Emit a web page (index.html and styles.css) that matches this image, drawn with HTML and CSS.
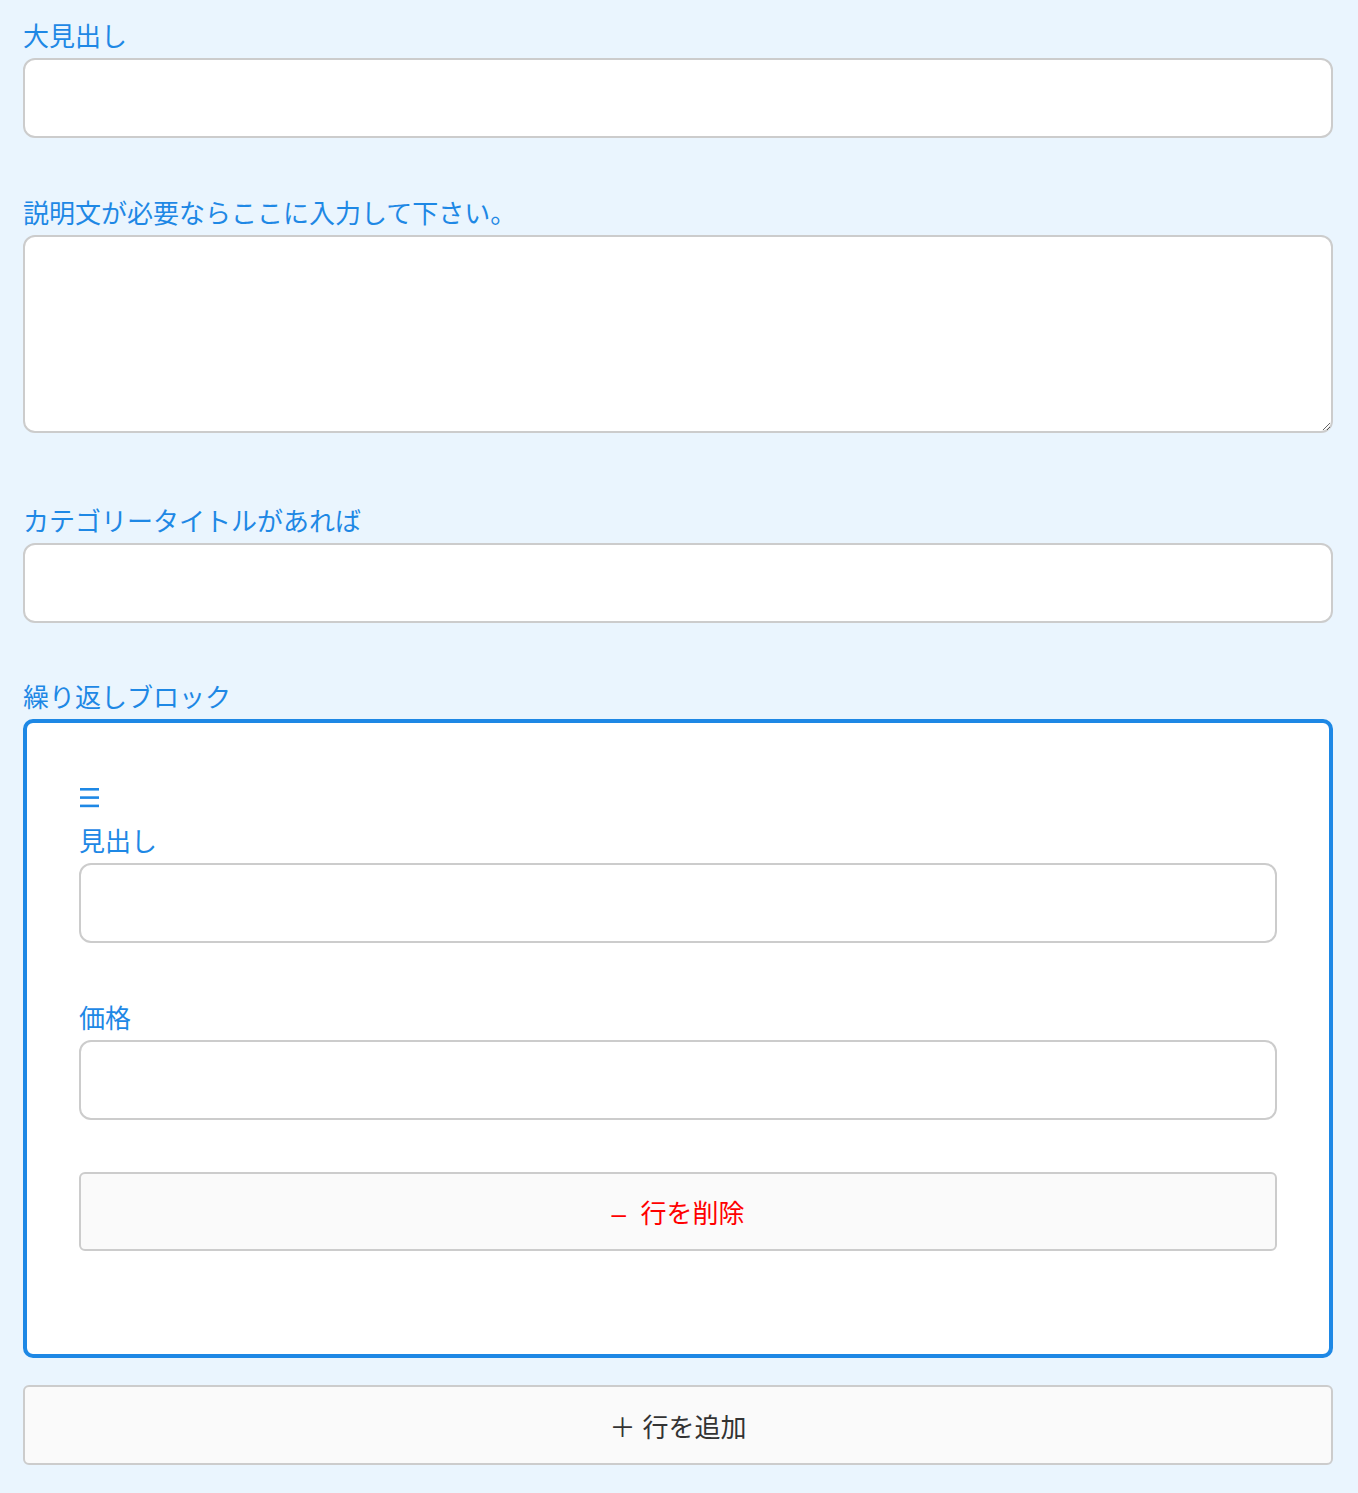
FILE: index.html
```html
<!DOCTYPE html>
<html lang="ja">
<head>
    <meta charset="UTF-8">
    <meta name="viewport" content="width=device-width, initial-scale=1.0">
    <title>ブロック編集</title>
    <link rel="stylesheet" href="styles.css">
</head>
<body>
    <div class="form">
        <div class="field field-first">
            <label class="field-label" for="mainTitle">大見出し</label>
            <input type="text" class="field-input" id="mainTitle">
        </div>

        <div class="field field-textarea">
            <label class="field-label" for="description">説明文が必要ならここに入力して下さい。</label>
            <textarea class="field-input field-input-area" id="description"></textarea>
        </div>

        <div class="field">
            <label class="field-label" for="categoryTitle">カテゴリータイトルがあれば</label>
            <input type="text" class="field-input" id="categoryTitle">
        </div>

        <div class="field field-repeat">
            <label class="field-label">繰り返しブロック</label>
            <div class="repeat-block">
                <div class="repeat-row">
                    <span class="drag-handle" title="並べ替え">
                        <svg width="20" height="20" viewBox="0 0 20 20">
                            <rect x="1" y="3" width="19" height="2.6" fill="#1e88e5"/>
                            <rect x="1" y="11.3" width="19" height="2.6" fill="#1e88e5"/>
                            <rect x="1" y="19.6" width="19" height="2.6" fill="#1e88e5"/>
                        </svg>
                    </span>

                    <div class="field field-first">
                        <label class="field-label" for="rowTitle">見出し</label>
                        <input type="text" class="field-input" id="rowTitle">
                    </div>

                    <div class="field field-last">
                        <label class="field-label" for="rowPrice">価格</label>
                        <input type="text" class="field-input" id="rowPrice">
                    </div>

                    <button type="button" class="row-button row-button-delete">– &nbsp;行を削除</button>
                </div>
            </div>
        </div>

        <button type="button" class="row-button row-button-add">＋ 行を追加</button>
    </div>
</body>
</html>
```

FILE: styles.css
```css
* {
    box-sizing: border-box;
    margin: 0;
    padding: 0;
}

body {
    font-family: "Noto Sans CJK JP", "Noto Sans", sans-serif;
    background: #eaf5fe;
    color: #333;
}

.form {
    padding: 16px 25px 28px 23px;
}

.field {
    margin-bottom: 54px;
}

.field-first {
    margin-bottom: 55px;
}

.field-label {
    display: block;
    font-size: 26px;
    line-height: 38px;
    color: #1e88e5;
    margin-bottom: 4px;
}

.field-input {
    display: block;
    width: 100%;
    height: 80px;
    padding: 10px 16px;
    border: 2px solid #ccc;
    border-radius: 12px;
    background: white;
    font-family: inherit;
    font-size: 26px;
    color: #333;
}

.field-input-area {
    height: 198px;
    resize: vertical;
}

.field-textarea {
    margin-bottom: 68px;
}

.field-repeat {
    margin-bottom: 27px;
}

.repeat-block {
    background: white;
    border: 4px solid #1e88e5;
    border-radius: 10px;
    padding: 60px 52px 103px;
}

.drag-handle {
    display: block;
    height: 38px;
    padding-top: 2px;
    cursor: grab;
}

.drag-handle svg {
    display: block;
    overflow: visible;
    height: 20px;
}

.field-last {
    margin-bottom: 52px;
}

.row-button {
    display: block;
    width: 100%;
    height: 80px;
    background: #fafafa;
    border: 2px solid #ccc;
    border-radius: 6px;
    font-family: "Liberation Sans", "Noto Sans CJK JP", sans-serif;
    font-size: 26px;
    cursor: pointer;
}

.row-button-delete {
    height: 79px;
    color: #f00;
}

.row-button-add {
    color: #333;
}
```
